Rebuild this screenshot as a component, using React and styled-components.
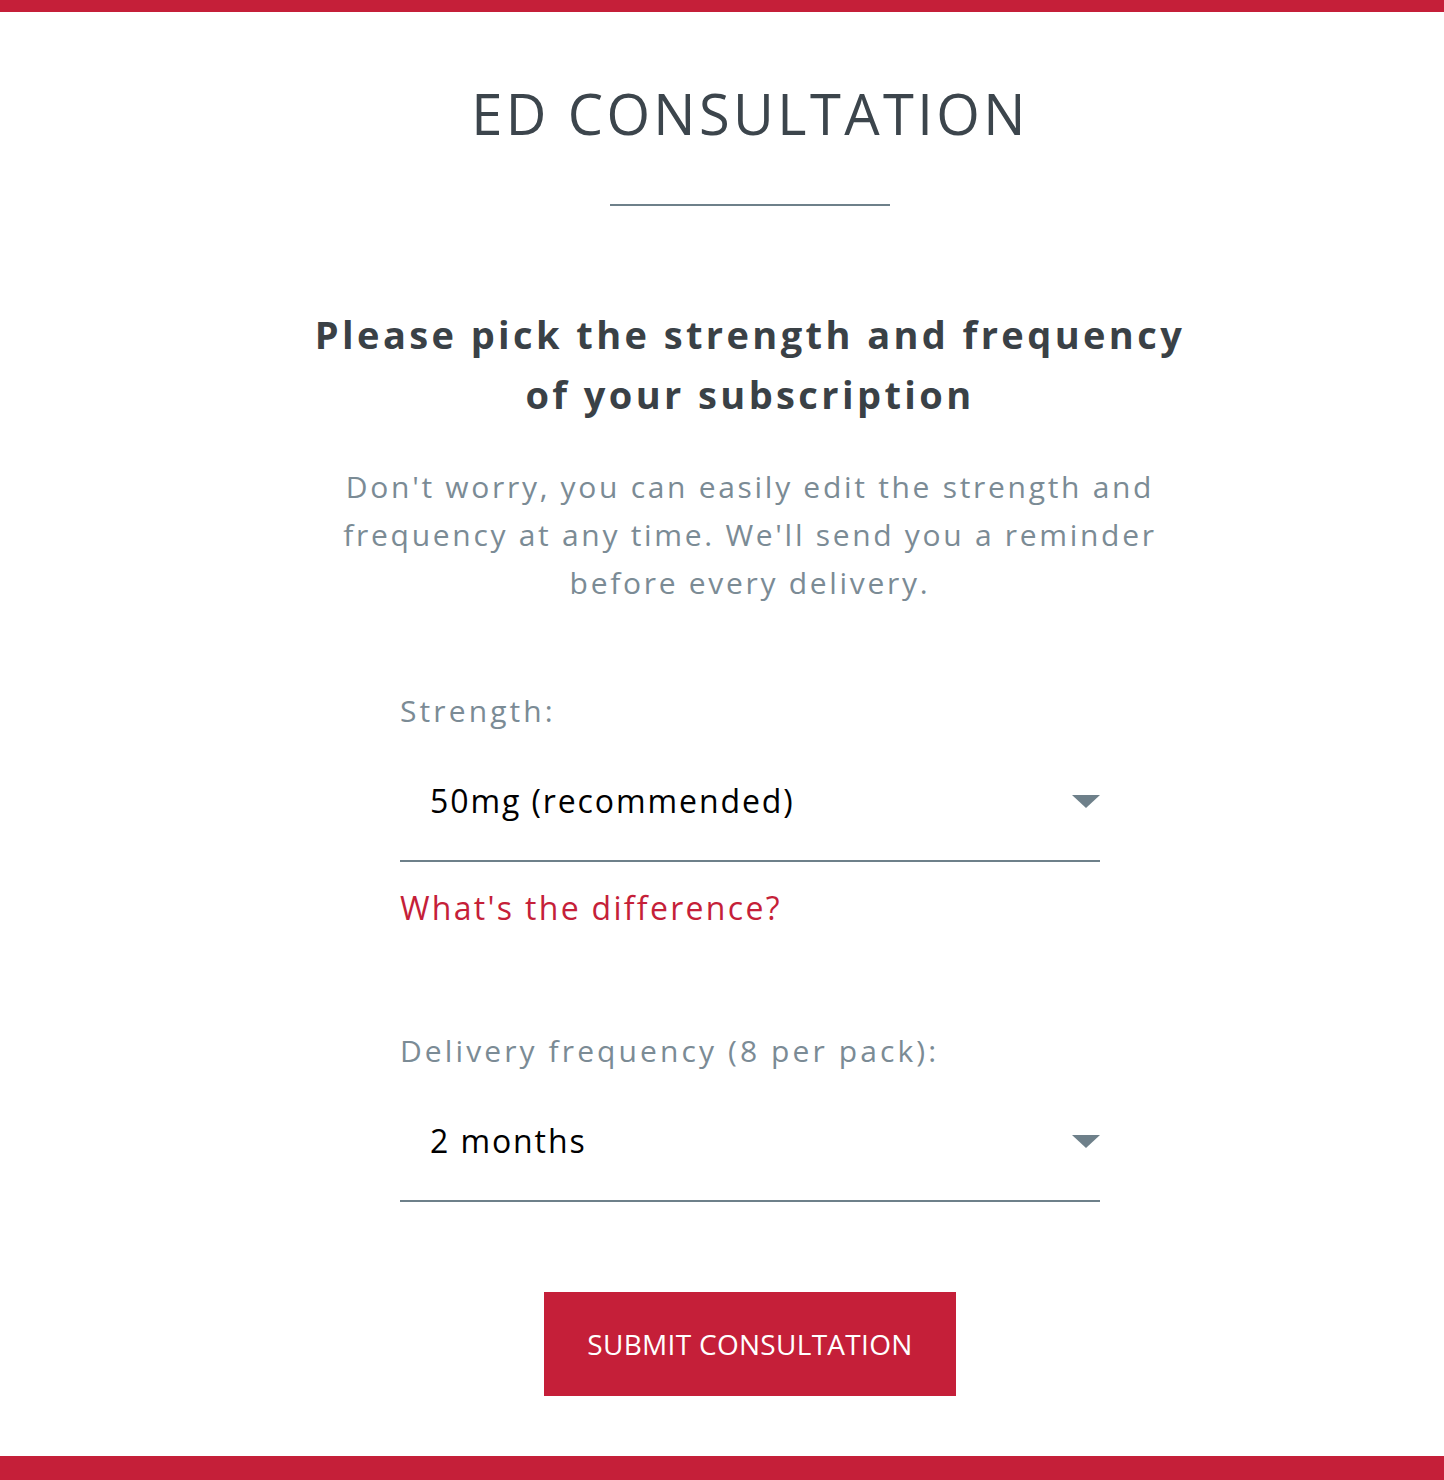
import React from "react";
import styled, { createGlobalStyle } from "styled-components";

const GlobalStyle = createGlobalStyle`
  html, body { margin: 0; padding: 0; background: #ffffff; }
  body { font-family: "Open Sans", "Noto Sans", sans-serif; }
`;

const RED = "#c51f39";
const SLATE = "#6e808a";

const Page = styled.div`
  display: flex;
  flex-direction: column;
  min-height: 1480px;
  border-top: 12px solid ${RED};
  box-sizing: border-box;
`;

const Main = styled.main`
  flex: 1;
  display: flex;
  flex-direction: column;
  align-items: center;
  padding-left: 56px;
`;

const Title = styled.h1`
  margin: 68px 0 0;
  font-size: 56px;
  line-height: 67px;
  font-weight: 400;
  letter-spacing: 3.4px;
  color: #3c454c;
  text-align: center;
`;

const Divider = styled.hr`
  width: 280px;
  height: 2px;
  margin: 57px 0 0;
  border: 0;
  background: ${SLATE};
`;

const Heading = styled.h2`
  margin: 98px 0 0;
  font-size: 38px;
  line-height: 60px;
  font-weight: 700;
  letter-spacing: 3.4px;
  color: #3a4146;
  text-align: center;
`;

const Intro = styled.p`
  margin: 39px 0 0;
  font-size: 30px;
  line-height: 48px;
  font-weight: 400;
  letter-spacing: 2.7px;
  color: #7b8b95;
  text-align: center;
`;

const Form = styled.form`
  width: 700px;
  display: flex;
  flex-direction: column;
  margin-top: 84px;
`;

const Group = styled.div`
  display: flex;
  flex-direction: column;
  & + & { margin-top: 103px; }
`;

const Label = styled.label`
  font-size: 30px;
  line-height: 40px;
  color: #7b8b95;
  letter-spacing: 3.1px;
`;

const Field = styled.div`
  display: flex;
  align-items: center;
  padding: 50px 0 39px;
  border-bottom: 2px solid ${SLATE};
`;

const Select = styled.select`
  flex: 1;
  appearance: none;
  -webkit-appearance: none;
  border: 0;
  background: transparent;
  padding: 0 0 0 30px;
  margin: 0;
  font-family: "Open Sans", "Noto Sans", sans-serif;
  font-size: 32px;
  line-height: 40px;
  height: 40px;
  color: #000;
  letter-spacing: 1.9px;
  outline: none;
`;

const Arrow = styled.svg`
  width: 28px;
  height: 13px;
  flex: none;
`;

const HelpLink = styled.a`
  margin-top: 26px;
  font-size: 32px;
  line-height: 40px;
  color: ${RED};
  text-decoration: none;
  letter-spacing: 2.3px;
`;

const Submit = styled.button`
  margin-top: 90px;
  width: 412px;
  height: 104px;
  border: 0;
  background: ${RED};
  color: #fff;
  font-family: "Open Sans", "Noto Sans", sans-serif;
  font-size: 28px;
  font-weight: 500;
  letter-spacing: 0.3px;
  text-transform: uppercase;
  cursor: pointer;
`;

const BottomBar = styled.footer`
  height: 24px;
  background: ${RED};
  margin-top: 60px;
`;

const Caret = () => (
  <Arrow viewBox="0 0 28 13" aria-hidden="true">
    <polygon points="0,0 28,0 14,13" fill="#6e808a" />
  </Arrow>
);

export default function App() {
  return (
    <>
      <GlobalStyle />
      <Page>
        <Main>
          <Title>ED CONSULTATION</Title>
          <Divider />
          <Heading>
            Please pick the strength and frequency
            <br />
            of your subscription
          </Heading>
          <Intro>
            Don't worry, you can easily edit the strength and
            <br />
            frequency at any time. We'll send you a reminder
            <br />
            before every delivery.
          </Intro>
          <Form onSubmit={(e) => e.preventDefault()}>
            <Group>
              <Label htmlFor="strength">Strength:</Label>
              <Field>
                <Select id="strength" defaultValue="50">
                  <option value="25">25mg</option>
                  <option value="50">50mg (recommended)</option>
                  <option value="100">100mg</option>
                </Select>
                <Caret />
              </Field>
              <HelpLink href="#">What's the difference?</HelpLink>
            </Group>
            <Group>
              <Label htmlFor="frequency">Delivery frequency (8 per pack):</Label>
              <Field>
                <Select id="frequency" defaultValue="2">
                  <option value="1">1 month</option>
                  <option value="2">2 months</option>
                  <option value="3">3 months</option>
                </Select>
                <Caret />
              </Field>
            </Group>
          </Form>
          <Submit type="button">Submit Consultation</Submit>
        </Main>
        <BottomBar />
      </Page>
    </>
  );
}
